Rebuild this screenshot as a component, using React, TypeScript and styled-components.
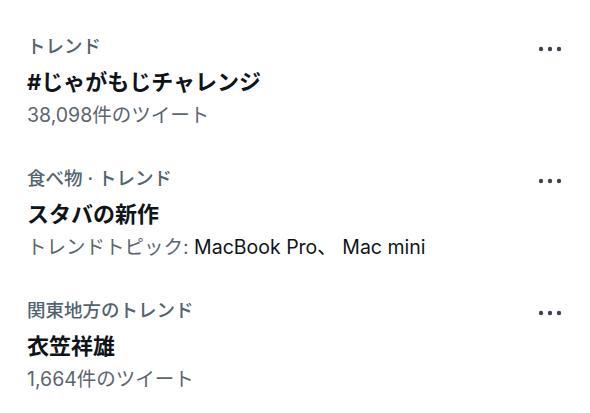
import styled, { createGlobalStyle } from "styled-components";

const GlobalStyle = createGlobalStyle`
    html, body {
        margin: 0;
        background: #ffffff;
    }
    body {
        font-family: Inter, "Noto Sans CJK JP", sans-serif;
        -webkit-font-smoothing: antialiased;
    }
`;

const Page = styled.div`
    width: 590px;
    height: 413px;
    overflow: hidden;
    padding: 34px 28px 0 27px;
    box-sizing: border-box;
`;

const TrendList = styled.ul`
    list-style: none;
    margin: 0;
    padding: 0;
`;

const Trend = styled.li`
    display: flex;
    align-items: flex-start;
    justify-content: space-between;
    height: 132px;
`;

const Body = styled.div`
    display: flex;
    flex-direction: column;
`;

const Category = styled.span`
    font-size: 18.5px;
    line-height: 24px;
    font-weight: 500;
    color: #536471;
`;

const Title = styled.span`
    font-size: 22px;
    line-height: 32px;
    font-weight: 700;
    color: #0f1419;
    margin-top: 8px;
`;

const Meta = styled.span`
    font-size: 19.5px;
    line-height: 26px;
    color: #5b6670;
    margin-top: 4px;
`;

const MetaLatin = styled.span`
    color: #0f1419;
`;

const MoreButton = styled.button`
    border: none;
    background: none;
    padding: 0;
    margin-top: 10px;
    width: 24px;
    height: 10px;
    display: flex;
    align-items: center;
    justify-content: center;
    cursor: pointer;
`;

function MoreIcon() {
    return (
        <svg width="24" height="6" viewBox="0 0 24 6">
            <circle cx="3" cy="3" r="2.2" fill="#3b4450" />
            <circle cx="12" cy="3" r="2.2" fill="#3b4450" />
            <circle cx="21" cy="3" r="2.2" fill="#3b4450" />
        </svg>
    );
}

interface ITrend {
    id: number;
    category: string;
    title: string;
    meta: React.ReactNode;
}

const trends: ITrend[] = [
    {
        id: 1,
        category: "トレンド",
        title: "#じゃがもじチャレンジ",
        meta: "38,098件のツイート",
    },
    {
        id: 2,
        category: "食べ物 · トレンド",
        title: "スタバの新作",
        meta: (
            <>
                トレンドトピック: <MetaLatin>MacBook Pro、 Mac mini</MetaLatin>
            </>
        ),
    },
    {
        id: 3,
        category: "関東地方のトレンド",
        title: "衣笠祥雄",
        meta: "1,664件のツイート",
    },
];

function App() {
    return (
        <Page>
            <GlobalStyle />
            <TrendList>
                {trends.map(trend => (
                    <Trend key={trend.id}>
                        <Body>
                            <Category>{trend.category}</Category>
                            <Title>{trend.title}</Title>
                            <Meta>{trend.meta}</Meta>
                        </Body>
                        <MoreButton aria-label="その他">
                            <MoreIcon />
                        </MoreButton>
                    </Trend>
                ))}
            </TrendList>
        </Page>
    );
}

export default App;
